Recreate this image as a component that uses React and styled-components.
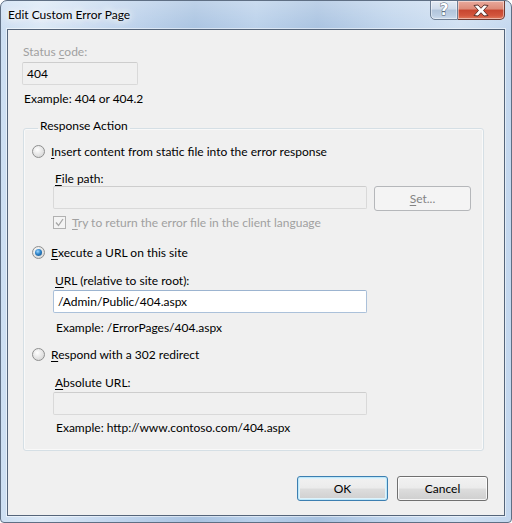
import React from 'react'
import styled, { createGlobalStyle } from 'styled-components'

const GlobalStyle = createGlobalStyle`
  html, body {
    margin: 0;
    padding: 0;
    background: #ffffff;
  }
  body {
    font-family: 'Segoe UI', Lato, 'Liberation Sans', sans-serif;
    font-size: 12px;
  }
`

const FONT = `'Segoe UI', Lato, 'Liberation Sans', sans-serif`

const Frame = styled.div`
  width: 512px;
  height: 523px;
  box-sizing: border-box;
  border: 1px solid #5f6f84;
  border-radius: 7px 7px 4px 4px;
  display: flex;
  flex-direction: column;
  overflow: hidden;
  background:
    linear-gradient(180deg, rgba(255, 255, 255, 0.25) 0%, rgba(255, 255, 255, 0) 30px),
    linear-gradient(
      90deg,
      #cddff2 0%,
      #dbe8f6 8%,
      #c2d6ee 22%,
      #a9c3e1 38%,
      #b9d0ea 50%,
      #a8c2e0 62%,
      #bfd4ec 76%,
      #d0e0f2 90%,
      #c3d7ee 100%
    );
  font-family: ${FONT};
`

const TitleBar = styled.div`
  height: 28px;
  display: flex;
  align-items: flex-start;
  flex-shrink: 0;
`

const Title = styled.div`
  flex: 1;
  padding: 6px 0 0 7px;
  line-height: 15px;
  color: #000;
  font-size: 12px;
  text-shadow: 0 0 6px #ffffff, 0 0 10px #ffffff, 0 0 14px rgba(255, 255, 255, 0.9);
`

const CaptionButtons = styled.div`
  display: flex;
  margin-right: 6px;
  margin-top: -1px;
`

const CaptionButton = styled.div`
  height: 20px;
  width: ${({ $wide }) => ($wide ? '47px' : '28px')};
  box-sizing: border-box;
  border: 1px solid ${({ $close }) => ($close ? '#6e3a32' : '#6e7f95')};
  border-left: ${({ $close }) => ($close ? 'none' : '1px solid #6e7f95')};
  border-radius: ${({ $close }) => ($close ? '0 0 5px 0' : '0 0 0 5px')};
  display: flex;
  align-items: center;
  justify-content: center;
  box-shadow: inset 0 0 0 1px rgba(255, 255, 255, 0.45);
  background: ${({ $close }) =>
    $close
      ? 'linear-gradient(180deg, #e9a99c 0%, #dd8a78 45%, #c7452f 50%, #d2553d 80%, #e07a5d 100%)'
      : 'linear-gradient(180deg, #e4ebf4 0%, #cfdbea 45%, #b1c4db 50%, #bccee3 80%, #cddcee 100%)'};
`

const HelpGlyph = styled.span`
  font-family: 'DejaVu Sans', sans-serif;
  font-weight: bold;
  font-size: 15px;
  line-height: 15px;
  color: #ffffff;
  margin-top: 1px;
  -webkit-text-stroke: 0.8px #4a5566;
  paint-order: stroke fill;
`

const Client = styled.div`
  flex: 1;
  margin: 0 6px 6px;
  border: 1px solid #55657a;
  box-shadow: 0 0 0 1px rgba(255, 255, 255, 0.5);
  background: #f0f0f0;
  display: flex;
  flex-direction: column;
  padding: 14px 16px 14px 14px;
  color: #000;
  font-size: 12px;
`

const Label = styled.div`
  line-height: 15px;
  padding-left: ${({ $indent }) => $indent || 1}px;
  margin-top: ${({ $top }) => $top || 0}px;
  color: ${({ $disabled }) => ($disabled ? '#a0a0a0' : '#000')};
  white-space: nowrap;
`

const TextBox = styled.div`
  box-sizing: border-box;
  width: ${({ $width }) => $width}px;
  height: 23px;
  margin-top: ${({ $top }) => $top || 0}px;
  border: 1px solid ${({ $active }) => ($active ? '#abc1da' : '#d9d9d9')};
  border-top-color: ${({ $active }) => ($active ? '#9cb4d0' : '#cdcdcd')};
  border-radius: 2px;
  background: ${({ $active }) => ($active ? '#ffffff' : '#f0f0f0')};
  padding: 0 4px;
  line-height: 21px;
  white-space: nowrap;
  color: #000;
`

const Group = styled.fieldset`
  margin: 12px 0 0 1px;
  width: 461px;
  box-sizing: border-box;
  border: 1px solid #d5dfe5;
  border-radius: 3px;
  box-shadow: inset 0 0 0 1px rgba(255, 255, 255, 0.6);
  padding: 5px 0 15px 8px;
  min-width: 0;
`

const Legend = styled.legend`
  margin-left: 6px;
  padding: 0 2px 6px;
  line-height: 15px;
  color: #000;
`

const OptionRow = styled.div`
  display: flex;
  align-items: center;
  line-height: 15px;
  margin-top: ${({ $top }) => $top || 0}px;
`

const Radio = styled.span`
  width: 13px;
  height: 13px;
  box-sizing: border-box;
  border-radius: 50%;
  border: 1px solid #8e8f8f;
  margin-right: 6px;
  flex-shrink: 0;
  display: flex;
  align-items: center;
  justify-content: center;
  background: radial-gradient(circle at 40% 35%, #ffffff 0%, #e8e8e8 45%, #cfcfcf 100%);

  &::after {
    content: '';
    display: ${({ $checked }) => ($checked ? 'block' : 'none')};
    width: 7px;
    height: 7px;
    border-radius: 50%;
    background: radial-gradient(circle at 40% 35%, #9fd7ff 0%, #2d83c9 45%, #154a7a 100%);
  }
`

const Indented = styled.div`
  margin-left: 21px;
  display: flex;
  flex-direction: column;
`

const InputRow = styled.div`
  display: flex;
  align-items: flex-start;
  gap: 7px;
`

const Button = styled.div`
  box-sizing: border-box;
  width: ${({ $width }) => $width || 91}px;
  height: ${({ $height }) => $height || 25}px;
  border: 1px solid
    ${({ $default, $disabled }) => ($disabled ? '#b5b7ba' : $default ? '#3c7fb1' : '#707070')};
  border-radius: 3px;
  display: flex;
  align-items: center;
  justify-content: center;
  color: ${({ $disabled }) => ($disabled ? '#838383' : '#000')};
  background: ${({ $disabled }) =>
    $disabled
      ? '#f4f4f4'
      : 'linear-gradient(180deg, #f2f2f2 0%, #ebebeb 48%, #dddddd 52%, #cfcfcf 100%)'};
  box-shadow: ${({ $default, $disabled }) =>
    $disabled
      ? 'none'
      : $default
      ? 'inset 0 0 0 1px #bfe7f8, inset 0 0 0 2px #dff3fb'
      : 'inset 0 0 0 1px rgba(255, 255, 255, 0.8)'};
  line-height: 15px;
`

const CheckRow = styled.div`
  display: flex;
  align-items: center;
  line-height: 15px;
  margin-top: 4px;
  color: #a0a0a0;
`

const CheckBox = styled.span`
  width: 13px;
  height: 13px;
  box-sizing: border-box;
  border: 1px solid #b1b1b1;
  background: #f4f4f4;
  margin-right: 6px;
  display: flex;
  align-items: center;
  justify-content: center;
`

const Footer = styled.div`
  margin-top: auto;
  display: flex;
  justify-content: flex-end;
  gap: 9px;
`

const Key = styled.u`
  text-decoration-thickness: 1px;
  text-underline-offset: 2px;
`

export default function App() {
  return (
    <>
      <GlobalStyle />
      <Frame>
        <TitleBar>
          <Title>Edit Custom Error Page</Title>
          <CaptionButtons>
            <CaptionButton>
              <HelpGlyph>?</HelpGlyph>
            </CaptionButton>
            <CaptionButton $wide $close>
              <svg width="16" height="13" viewBox="0 0 16 13">
                <path
                  d="M1 1.5 L5 1 L8 4.3 L11 1 L15 1.5 L10.5 6.5 L15 11.5 L11 12 L8 8.7 L5 12 L1 11.5 L5.5 6.5 Z"
                  fill="#ffffff"
                  stroke="#4d2620"
                  strokeWidth="0.9"
                  strokeLinejoin="round"
                />
              </svg>
            </CaptionButton>
          </CaptionButtons>
        </TitleBar>
        <Client>
          <Label $disabled>
            Status <Key>c</Key>ode:
          </Label>
          <TextBox $width={116} $top={3}>
            404
          </TextBox>
          <Label $top={6} $indent={2}>
            Example: 404 or 404.2
          </Label>

          <Group>
            <Legend>Response Action</Legend>
            <OptionRow>
              <Radio />
              <span>
                <Key>I</Key>nsert content from static file into the error response
              </span>
            </OptionRow>
            <Indented>
              <Label $top={12} $indent={2}>
                <Key>F</Key>ile path:
              </Label>
              <InputRow>
                <TextBox $width={314} />
                <Button $width={97} $height={25} $disabled>
                  <span>
                    <Key>S</Key>et...
                  </span>
                </Button>
              </InputRow>
              <CheckRow>
                <CheckBox>
                  <svg width="9" height="9" viewBox="0 0 9 9">
                    <path d="M1 4.5 L3.5 7.5 L8 1" fill="none" stroke="#a7a7a7" strokeWidth="1.3" />
                  </svg>
                </CheckBox>
                <span>
                  <Key>T</Key>ry to return the error file in the client language
                </span>
              </CheckRow>
            </Indented>

            <OptionRow $top={15}>
              <Radio $checked />
              <span>
                <Key>E</Key>xecute a URL on this site
              </span>
            </OptionRow>
            <Indented>
              <Label $top={13} $indent={2}>
                <Key>U</Key>RL (relative to site root):
              </Label>
              <TextBox $width={314} $top={2} $active>
                /Admin/Public/404.aspx
              </TextBox>
              <Label $top={7} $indent={3}>
                Example: /ErrorPages/404.aspx
              </Label>
            </Indented>

            <OptionRow $top={12}>
              <Radio />
              <span>
                <Key>R</Key>espond with a 302 redirect
              </span>
            </OptionRow>
            <Indented>
              <Label $top={13} $indent={2}>
                <Key>A</Key>bsolute URL:
              </Label>
              <TextBox $width={314} $top={2} />
              <Label $top={5} $indent={3}>
                Example: http://www.contoso.com/404.aspx
              </Label>
            </Indented>
          </Group>

          <Footer>
            <Button $default>OK</Button>
            <Button>Cancel</Button>
          </Footer>
        </Client>
      </Frame>
    </>
  )
}
